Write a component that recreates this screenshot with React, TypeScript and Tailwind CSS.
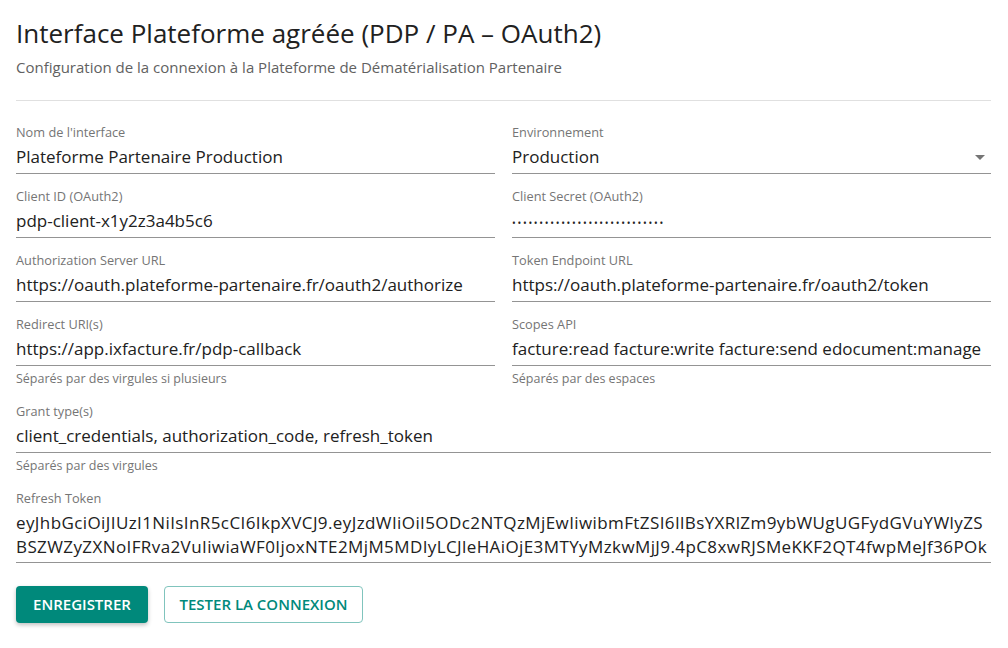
import React from 'react';

type FieldProps = {
  label: string;
  value?: React.ReactNode;
  helper?: string;
  select?: boolean;
};

function Field({ label, value, helper, select }: FieldProps) {
  return (
    <div className="flex flex-col pt-[15px]">
      <label className="text-[12.75px] leading-[14px] text-[#757575]">{label}</label>
      <div className="flex items-start border-b border-[#949494] h-[35px] pt-[6px]">
        <div className="flex-1 text-[17px] leading-[24px] text-[#212121] whitespace-nowrap overflow-hidden">{value}</div>
        {select && (
          <svg width="10" height="5" viewBox="0 0 10 5" className="mr-[6px] mt-[10px]">
            <path d="M0 0 L10 0 L5 5 Z" fill="#757575" />
          </svg>
        )}
      </div>
      {helper && <div className="text-[12.5px] leading-[14px] text-[#757575] pt-[6px] pb-[3px]">{helper}</div>}
    </div>
  );
}

export default function App() {
  return (
    <div className="bg-white min-h-[648px] px-4 pt-[14px] text-[#212121]" style={{ fontFamily: '"Open Sans", sans-serif' }}>
      <h1 className="text-[26px] leading-[38px] font-normal text-[#212121]">Interface Plateforme agréée (PDP / PA – OAuth2)</h1>
      <p className="text-[15px] leading-[20px] text-[#616161] mt-[5px]">
        Configuration de la connexion à la Plateforme de Dématérialisation Partenaire
      </p>
      <hr className="border-0 border-t border-[#e0e0e0] mt-[23px] mr-[1px]" />

      <div className="grid grid-cols-2 gap-x-[17px] pr-[1px] pt-[9px]">
        <Field label="Nom de l'interface" value="Plateforme Partenaire Production" />
        <Field label="Environnement" value="Production" select />
        <Field label="Client ID (OAuth2)" value="pdp-client-x1y2z3a4b5c6" />
        <Field
          label="Client Secret (OAuth2)"
          value={<span className="text-[10px] tracking-[1.7px]">{'•'.repeat(28)}</span>}
        />
        <Field label="Authorization Server URL" value="https://oauth.plateforme-partenaire.fr/oauth2/authorize" />
        <Field label="Token Endpoint URL" value="https://oauth.plateforme-partenaire.fr/oauth2/token" />
        <Field
          label="Redirect URI(s)"
          value="https://app.ixfacture.fr/pdp-callback"
          helper="Séparés par des virgules si plusieurs"
        />
        <Field
          label="Scopes API"
          value="facture:read facture:write facture:send edocument:manage"
          helper="Séparés par des espaces"
        />
        <div className="col-span-2">
          <Field
            label="Grant type(s)"
            value="client_credentials, authorization_code, refresh_token"
            helper="Séparés par des virgules"
          />
        </div>
        <div className="col-span-2 flex flex-col pt-[15px]">
          <label className="text-[12.75px] leading-[14px] text-[#757575]">Refresh Token</label>
          <div className="border-b border-[#949494] pt-[6px] pb-[3px] text-[17px] leading-[24px] tracking-[0.4px] text-[#212121] whitespace-nowrap overflow-hidden">
            <div>eyJhbGciOiJIUzI1NiIsInR5cCI6IkpXVCJ9.eyJzdWIiOiI5ODc2NTQzMjEwIiwibmFtZSI6IlBsYXRlZm9ybWUgUGFydGVuYWlyZS</div>
            <div>BSZWZyZXNoIFRva2VuIiwiaWF0IjoxNTE2MjM5MDIyLCJleHAiOjE3MTYyMzkwMjJ9.4pC8xwRJSMeKKF2QT4fwpMeJf36POk</div>
          </div>
        </div>
      </div>

      <div className="flex gap-4 mt-[23px]">
        <button className="h-[37px] bg-[#00897b] text-white text-[15px] font-semibold rounded shadow-[0_2px_4px_rgba(0,0,0,0.25)] w-[132px]">
          ENREGISTRER
        </button>
        <button className="h-[37px] border border-[#80c4bd] text-[#00897b] text-[15px] font-semibold rounded w-[199px]">
          TESTER LA CONNEXION
        </button>
      </div>
    </div>
  );
}
